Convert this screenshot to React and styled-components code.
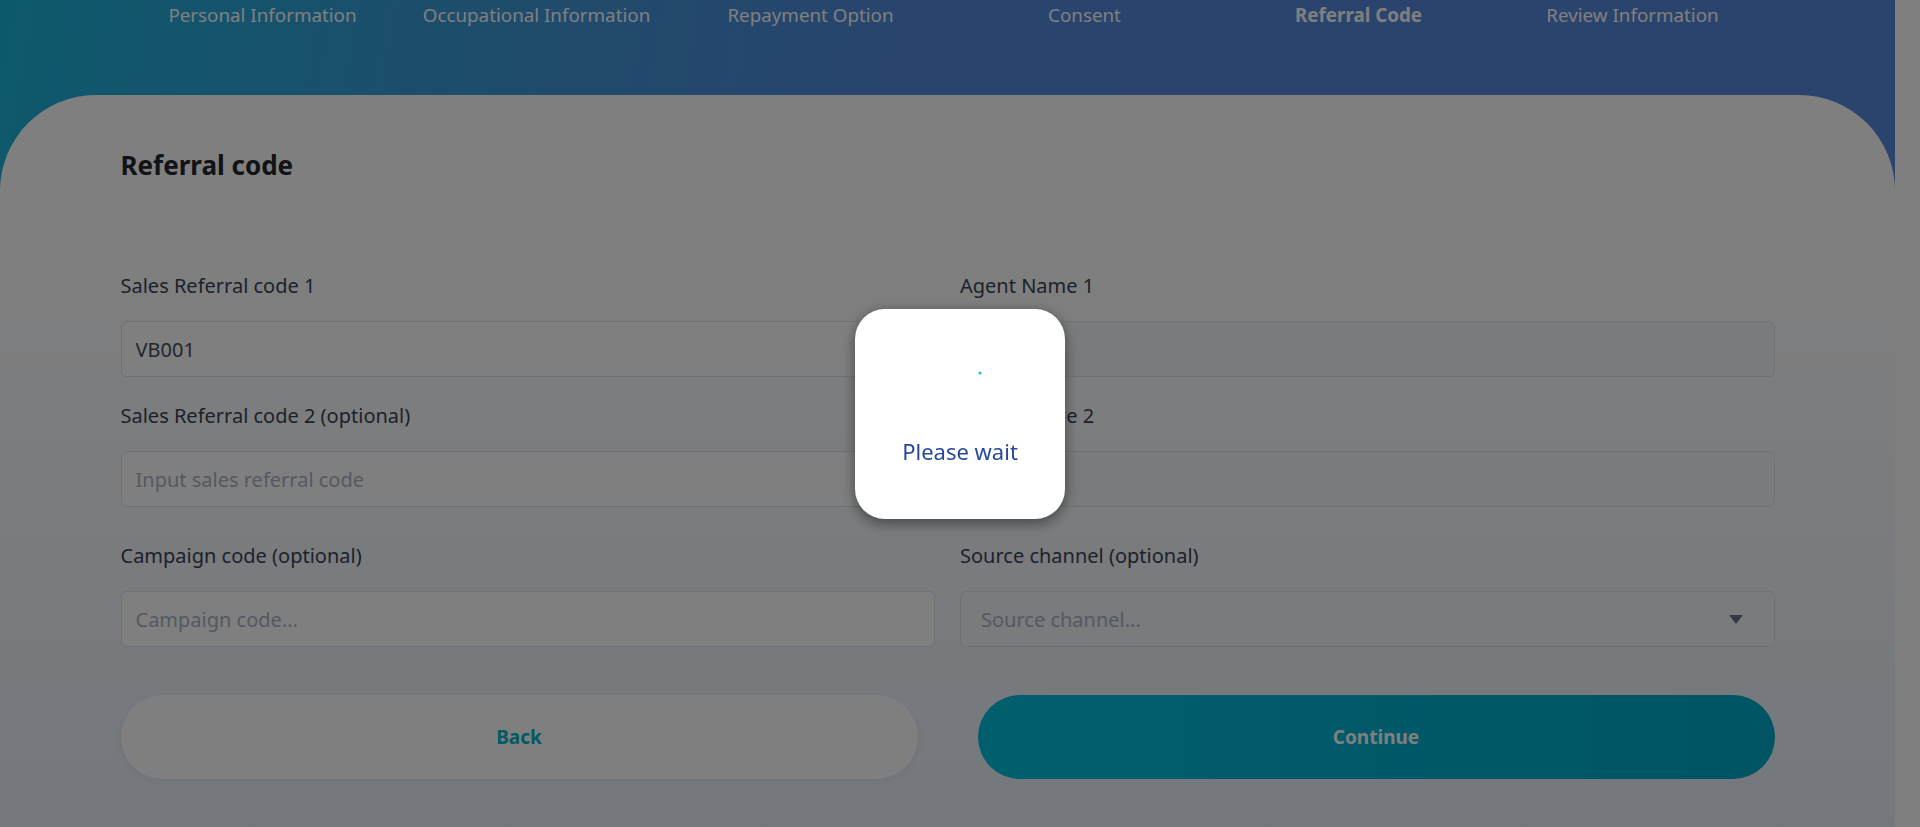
import React from 'react'
import styled, { createGlobalStyle } from 'styled-components'

const steps = [
    { label: 'Personal Information' },
    { label: 'Occupational Information' },
    { label: 'Repayment Option' },
    { label: 'Consent' },
    { label: 'Referral Code', active: true },
    { label: 'Review Information' },
]

const App = () => {
    return (
        <>
            <GlobalStyle />
            <Screen>
                <Page>
                    <Stepper>
                        {steps.map((s) => (
                            <StepLabel key={s.label} $active={s.active}>{s.label}</StepLabel>
                        ))}
                    </Stepper>
                    <Card>
                        <Inner>
                            <Title>Referral code</Title>
                            <FieldGrid>
                                <Field>
                                    <Label>Sales Referral code 1</Label>
                                    <Input defaultValue="VB001" />
                                </Field>
                                <Field>
                                    <Label>Agent Name 1</Label>
                                    <Input $disabled readOnly />
                                </Field>
                                <Field>
                                    <Label>Sales Referral code 2 (optional)</Label>
                                    <Input placeholder="Input sales referral code" />
                                </Field>
                                <Field>
                                    <Label>Agent Name 2</Label>
                                    <Input $disabled readOnly />
                                </Field>
                                <Field $spaced>
                                    <Label>Campaign code (optional)</Label>
                                    <Input placeholder="Campaign code..." />
                                </Field>
                                <Field $spaced>
                                    <Label>Source channel (optional)</Label>
                                    <SelectBox>
                                        <Placeholder>Source channel...</Placeholder>
                                        <svg width="14" height="9" viewBox="0 0 14 9">
                                            <path d="M0 0 L14 0 L7 9 Z" fill="#6b7687" />
                                        </svg>
                                    </SelectBox>
                                </Field>
                            </FieldGrid>
                            <Actions>
                                <BackButton>Back</BackButton>
                                <ContinueButton>Continue</ContinueButton>
                            </Actions>
                        </Inner>
                    </Card>
                </Page>
                <ScrollTrack />
            </Screen>
            <Overlay>
                <Loader>
                    <svg width="44" height="44" viewBox="0 0 44 44">
                        <circle cx="42" cy="22" r="1.6" fill="#22c0e2" />
                    </svg>
                    <WaitText>Please wait</WaitText>
                </Loader>
            </Overlay>
        </>
    )
}

const GlobalStyle = createGlobalStyle`
    html, body {
        margin: 0;
        padding: 0;
        height: 100%;
        overflow: hidden;
    }
    body {
        font-family: "Noto Sans", "Open Sans", sans-serif;
    }
    * {
        box-sizing: border-box;
    }
`;

const Screen = styled.div`
    display: flex;
    height: 827px;
`;

const Page = styled.div`
    flex: 1;
    display: flex;
    flex-direction: column;
    background: linear-gradient(100deg, #1ab3d8 0%, #3a9bd9 22%, #5389da 45%, #5788db 100%);
`;

const ScrollTrack = styled.div`
    width: 25px;
    background: #fefefe;
`;

const Stepper = styled.div`
    display: grid;
    grid-template-columns: repeat(6, 274px);
    justify-content: center;
    height: 95px;
    padding-top: 2px;
`;

const StepLabel = styled.div`
    text-align: center;
    font-size: 18.8px;
    line-height: 26px;
    color: #fff;
    font-weight: ${(p) => (p.$active ? 700 : 400)};
`;

const Card = styled.div`
    flex: 1;
    border-radius: 96px 96px 0 0;
    background: linear-gradient(180deg, #ffffff 0%, #ffffff 18%, #e9f0f9 100%);
    padding-top: 52px;
`;

const Inner = styled.div`
    width: 1654px;
    margin: 0 auto;
`;

const Title = styled.h1`
    margin: 0 0 89px;
    font-size: 26px;
    line-height: 36px;
    font-weight: 700;
    color: #22262e;
`;

const FieldGrid = styled.div`
    display: grid;
    grid-template-columns: 1fr 1fr;
    column-gap: 25px;
    row-gap: 25px;
`;

const Field = styled.div`
    display: flex;
    flex-direction: column;
    margin-top: ${(p) => (p.$spaced ? '10px' : '0')};
`;

const Label = styled.label`
    font-size: 20px;
    line-height: 28px;
    color: #3a4455;
    margin-bottom: 21px;
`;

const Input = styled.input`
    height: 56px;
    border: 1px solid #dde2ea;
    border-radius: 6px;
    padding: 0 14px;
    font-family: inherit;
    font-size: 20px;
    color: #434c5b;
    background: ${(p) => (p.$disabled ? '#f3f6fb' : '#ffffff')};
    outline: none;

    &::placeholder {
        color: #a9b3c2;
    }
`;

const SelectBox = styled.div`
    height: 56px;
    border: 1px solid #dde2ea;
    border-radius: 6px;
    padding: 0 31px 0 20px;
    display: flex;
    align-items: center;
    justify-content: space-between;
    background: #f3f6fb;
`;

const Placeholder = styled.span`
    font-size: 20px;
    color: #a9b3c2;
`;

const Actions = styled.div`
    display: grid;
    grid-template-columns: 1fr 1fr;
    column-gap: 60px;
    margin-top: 48px;
`;

const BaseButton = styled.button`
    height: 84px;
    border: none;
    border-radius: 42px;
    font-family: inherit;
    font-size: 19px;
    font-weight: 700;
    cursor: pointer;
`;

const BackButton = styled(BaseButton)`
    background: #ffffff;
    color: #06b4c6;
    box-shadow: 0 2px 10px rgba(40, 60, 90, 0.06);
`;

const ContinueButton = styled(BaseButton)`
    background: linear-gradient(90deg, #03bddb 0%, #00a9c7 100%);
    color: #ffffff;
`;

const Overlay = styled.div`
    position: fixed;
    inset: 0;
    background: rgba(0, 0, 0, 0.5);
    display: flex;
    align-items: center;
    justify-content: center;
`;

const Loader = styled.div`
    width: 210px;
    height: 210px;
    background: #fff;
    border-radius: 30px;
    box-shadow: 0 4px 14px rgba(0, 0, 0, 0.45);
    display: flex;
    flex-direction: column;
    align-items: center;
    padding-top: 42px;
    gap: 41px;
`;

const WaitText = styled.div`
    font-size: 22px;
    line-height: 30px;
    color: #27489a;
`;

export default App
